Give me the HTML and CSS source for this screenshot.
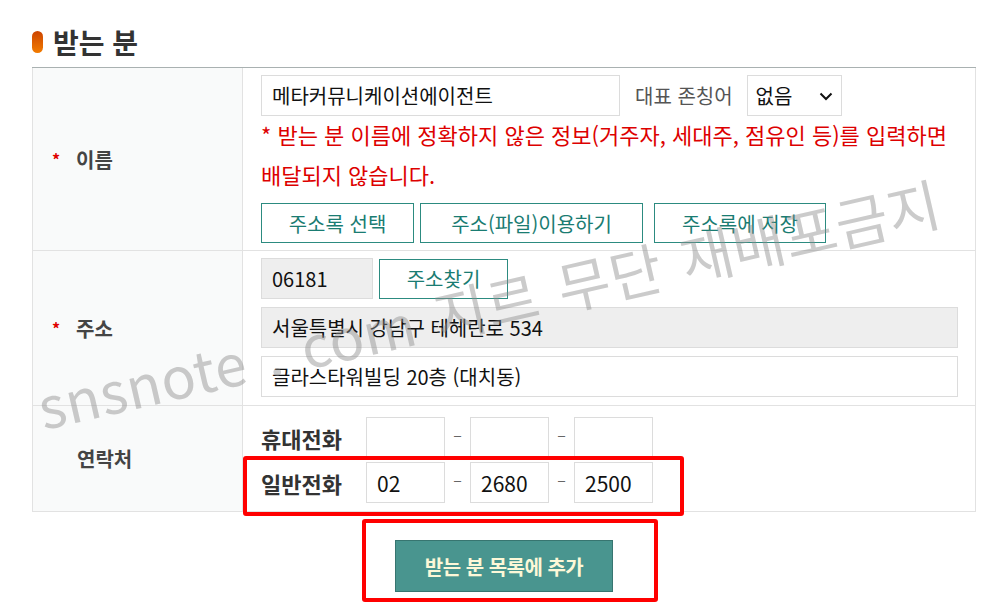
FILE: index.html
```html
<!DOCTYPE html>
<html lang="ko">
<head>
  <meta charset="UTF-8">
  <meta name="viewport" content="width=device-width, initial-scale=1.0">
  <title>받는 분</title>
  <link rel="stylesheet" href="styles.css">
</head>
<body>
  <div class="page">
    <h2 class="section-title"><span class="bullet"></span>받는 분</h2>

    <div class="form-grid">
      <div class="cell-label"><span class="req">*</span>이름</div>
      <div class="cell-body body-name">
        <div class="line">
          <input type="text" class="field field-name" value="메타커뮤니케이션에이전트">
          <span class="sub-label">대표 존칭어</span>
          <div class="select-wrap">
            <select class="field field-select">
              <option>없음</option>
              <option>님</option>
              <option>귀하</option>
            </select>
            <svg class="chevron" width="14" height="9" viewBox="0 0 14 9">
              <path d="M1.5 1.5 L7 7 L12.5 1.5" fill="none" stroke="#111" stroke-width="2"/>
            </svg>
          </div>
        </div>
        <p class="notice">* 받는 분 이름에 정확하지 않은 정보(거주자, 세대주, 점유인 등)를 입력하면 배달되지 않습니다.</p>
        <div class="btn-line">
          <button type="button" class="btn-outline btn-book">주소록 선택</button>
          <button type="button" class="btn-outline btn-file">주소(파일)이용하기</button>
          <button type="button" class="btn-outline btn-save">주소록에 저장</button>
        </div>
      </div>

      <div class="cell-label"><span class="req">*</span>주소</div>
      <div class="cell-body body-addr">
        <div class="line">
          <input type="text" class="field field-zip" value="06181" readonly>
          <button type="button" class="btn-outline btn-find">주소찾기</button>
        </div>
        <input type="text" class="field field-addr" value="서울특별시 강남구 테헤란로 534" readonly>
        <input type="text" class="field field-addr field-addr2" value="글라스타워빌딩 20층 (대치동)">
      </div>

      <div class="cell-label">연락처</div>
      <div class="cell-body body-tel">
        <div class="tel-line">
          <span class="tel-label">휴대전화</span>
          <input type="text" class="field field-tel">
          <span class="dash">–</span>
          <input type="text" class="field field-tel">
          <span class="dash">–</span>
          <input type="text" class="field field-tel">
        </div>
        <div class="tel-line">
          <span class="tel-label">일반전화</span>
          <input type="text" class="field field-tel" value="02">
          <span class="dash">–</span>
          <input type="text" class="field field-tel" value="2680">
          <span class="dash">–</span>
          <input type="text" class="field field-tel" value="2500">
        </div>
      </div>
    </div>

    <div class="actions">
      <button type="button" class="btn-add">받는 분 목록에 추가</button>
    </div>

    <!-- highlight marks -->
    <div class="mark mark-tel"></div>
    <div class="mark mark-add"></div>

    <div class="watermark">snsnote . com 지르 무단 재배포금지</div>
  </div>
</body>
</html>
```

FILE: styles.css
```css
* {
  margin: 0;
  padding: 0;
  box-sizing: border-box;
}

body {
  background: #fff;
  font-family: 'Noto Sans CJK KR', 'Noto Sans', sans-serif;
  color: #333;
  overflow: hidden;
}

.page {
  position: relative;
  width: 1003px;
  height: 610px;
  padding: 24px 0 0 32px;
  overflow: hidden;
}

.section-title {
  display: flex;
  align-items: center;
  gap: 10px;
  height: 36px;
  font-size: 28px;
  font-weight: 700;
  color: #333;
}

.bullet {
  display: inline-block;
  width: 11px;
  height: 22px;
  border-radius: 6px;
  background: linear-gradient(180deg, #cc4400 0%, #f27c00 100%);
}

/* form grid: label column + body column */
.form-grid {
  margin-top: 7px;
  width: 944px;
  display: grid;
  grid-template-columns: 211px 733px;
  grid-template-rows: 183px 155px 106px;
  border-top: 1px solid #a9b1b1;
}

.cell-label {
  display: flex;
  align-items: center;
  padding-left: 44px;
  background: #f9fafa;
  border-left: 1px solid #e2e2e2;
  border-right: 1px solid #e2e2e2;
  border-bottom: 1px solid #e2e2e2;
  font-size: 20px;
  font-weight: 700;
  color: #444;
}

.req {
  display: inline-block;
  width: 24px;
  margin-left: -25px;
  color: #e00000;
  font-size: 16px;
}

.cell-body {
  padding: 7px 18px 0 18px;
  border-right: 1px solid #e2e2e2;
  border-bottom: 1px solid #e2e2e2;
}

.body-tel {
  padding-top: 11px;
}

.line {
  display: flex;
  align-items: center;
}

.field {
  height: 41px;
  border: 1px solid #dcdcdc;
  background: #fff;
  font-family: inherit;
  font-size: 20px;
  color: #111;
  padding: 0 10px;
  outline: none;
}

.field-name {
  width: 359px;
}

.sub-label {
  margin-left: 15px;
  font-size: 20px;
  color: #555;
}

.select-wrap {
  position: relative;
  margin-left: 14px;
}

.field-select {
  width: 95px;
  appearance: none;
  -webkit-appearance: none;
  padding: 0 8px;
}

.chevron {
  position: absolute;
  right: 9px;
  top: 17px;
  pointer-events: none;
}

.notice {
  margin-top: -2px;
  font-size: 22px;
  line-height: 40px;
  color: #dd0000;
}

.btn-line {
  display: flex;
  gap: 6px;
  margin-top: 9px;
}

.btn-outline {
  height: 40px;
  border: 1px solid #2c8b80;
  background: #fff;
  color: #1a7c72;
  font-family: inherit;
  font-size: 20px;
  cursor: pointer;
}

.btn-book {
  width: 153px;
}

.btn-file {
  width: 223px;
}

.btn-save {
  width: 172px;
  margin-left: 5px;
}

.field-zip {
  width: 112px;
  background: #eee;
}

.btn-find {
  width: 129px;
  margin-left: 6px;
}

.field-addr {
  display: block;
  width: 697px;
  margin-top: 8px;
  background: #eee;
}

.field-addr2 {
  background: #fff;
}

.tel-line {
  display: flex;
  align-items: center;
}

.tel-line + .tel-line {
  margin-top: 4px;
}

.tel-label {
  width: 105px;
  font-size: 22px;
  font-weight: 700;
  color: #333;
}

.field-tel {
  width: 79px;
  height: 41px;
  font-size: 21px;
}

.dash {
  width: 25px;
  text-align: center;
  font-size: 16px;
  color: #666;
  margin-top: -8px;
}

.actions {
  width: 944px;
  display: flex;
  justify-content: center;
  margin-top: 28px;
}

.btn-add {
  width: 218px;
  height: 52px;
  background: #49958f;
  border: 1px solid #377570;
  color: #fdf8d8;
  font-family: inherit;
  font-size: 20px;
  font-weight: 700;
  letter-spacing: -0.5px;
  cursor: pointer;
}

.mark {
  position: absolute;
  border: 4px solid #ff0000;
  border-radius: 3px;
  pointer-events: none;
}

.mark-tel {
  left: 243px;
  top: 456px;
  width: 441px;
  height: 60px;
}

.mark-add {
  left: 362px;
  top: 519px;
  width: 296px;
  height: 83px;
}

.watermark {
  position: absolute;
  left: 46px;
  top: 370px;
  transform-origin: left bottom;
  transform: rotate(-12.9deg);
  font-family: 'Noto Sans CJK KR', sans-serif;
  font-weight: 400;
  font-size: 57px;
  line-height: 70px;
  letter-spacing: 0.5px;
  word-spacing: 4px;
  color: rgba(140, 140, 140, 0.45);
  white-space: nowrap;
  pointer-events: none;
}
```
